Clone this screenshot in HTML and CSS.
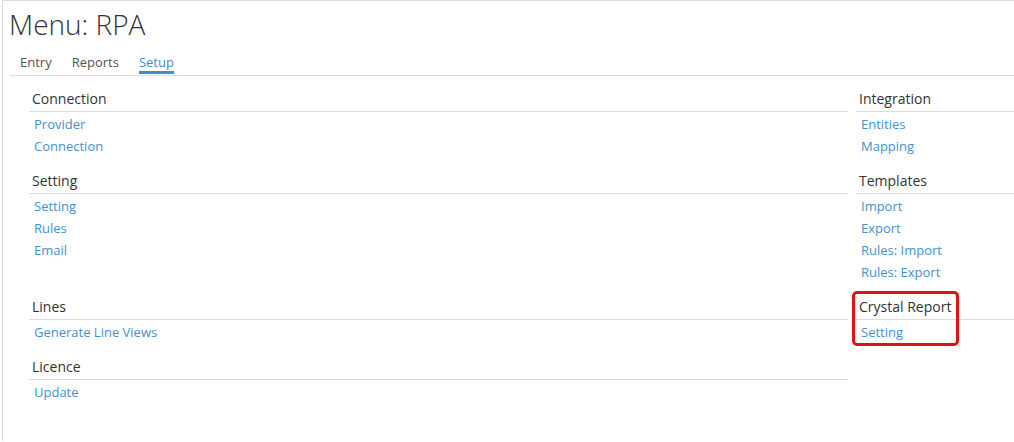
FILE: index.html
```html
<!DOCTYPE html>
<html>
<head>
<meta charset="utf-8">
<link rel="stylesheet" href="styles.css">
</head>
<body>
<div class="page">
  <h1 class="title">Menu: RPA</h1>
  <nav class="tabs">
    <a class="tab">Entry</a>
    <a class="tab">Reports</a>
    <a class="tab active">Setup</a>
  </nav>
  <div class="grid">
    <section class="sec">
      <h2 class="sec-head">Connection</h2>
      <ul class="links"><li><a>Provider</a></li><li><a>Connection</a></li></ul>
    </section>
    <section class="sec">
      <h2 class="sec-head">Integration</h2>
      <ul class="links"><li><a>Entities</a></li><li><a>Mapping</a></li></ul>
    </section>
    <section class="sec">
      <h2 class="sec-head">Setting</h2>
      <ul class="links"><li><a>Setting</a></li><li><a>Rules</a></li><li><a>Email</a></li></ul>
    </section>
    <section class="sec">
      <h2 class="sec-head">Templates</h2>
      <ul class="links"><li><a>Import</a></li><li><a>Export</a></li><li><a>Rules: Import</a></li><li><a>Rules: Export</a></li></ul>
    </section>
    <section class="sec">
      <h2 class="sec-head">Lines</h2>
      <ul class="links"><li><a>Generate Line Views</a></li></ul>
    </section>
    <section class="sec highlight-wrap">
      <h2 class="sec-head">Crystal Report</h2>
      <ul class="links"><li><a>Setting</a></li></ul>
      <div class="highlight"></div>
    </section>
    <section class="sec">
      <h2 class="sec-head">Licence</h2>
      <ul class="links"><li><a>Update</a></li></ul>
    </section>
  </div>
</div>
</body>
</html>
```

FILE: styles.css
```css
html, body {
  margin: 0;
  padding: 0;
  background: #fff;
}
body {
  font-family: "Open Sans", "Liberation Sans", sans-serif;
  color: #333;
}
.page {
  margin-left: 2px;
  border-left: 1px solid #d9d9d9;
  border-top: 1px solid #dcdcdc;
  height: 441px;
  box-sizing: border-box;
  overflow: hidden;
}
.title {
  margin: 0;
  padding: 3px 0 0 6px;
  font-size: 28px;
  font-weight: 300;
  line-height: 40px;
  color: #333;
}
.tabs {
  display: flex;
  margin: 0 0 0 7px;
  padding-top: 10px;
  border-bottom: 1px solid #ddd;
}
.tab {
  font-size: 13px;
  line-height: 17px;
  color: #555;
  padding: 0;
  margin: 0 10px 1px 10px;
  border-bottom: 3px solid transparent;
}
.tab.active {
  color: #3d8ed0;
  border-bottom-color: #3d8ed0;
}
.grid {
  display: grid;
  grid-template-columns: 819px 1fr;
  column-gap: 8px;
  margin: 12px 0 0 26px;
}
.sec {
  margin-bottom: 13px;
  position: relative;
}
.sec-head {
  margin: 0;
  font-size: 14px;
  font-weight: 400;
  line-height: 22px;
  color: #333;
  padding: 0 0 1px 3px;
  border-bottom: 1px solid #ddd;
}
.links {
  list-style: none;
  margin: 1px 0 0 0;
  padding: 0 0 0 5px;
}
.links li {
  font-size: 13px;
  line-height: 22px;
}
.links a {
  color: #4391d0;
}
.highlight {
  position: absolute;
  left: -4px;
  top: -5px;
  width: 101px;
  height: 49px;
  border: 3px solid #dc1414;
  border-radius: 5px;
}
```
